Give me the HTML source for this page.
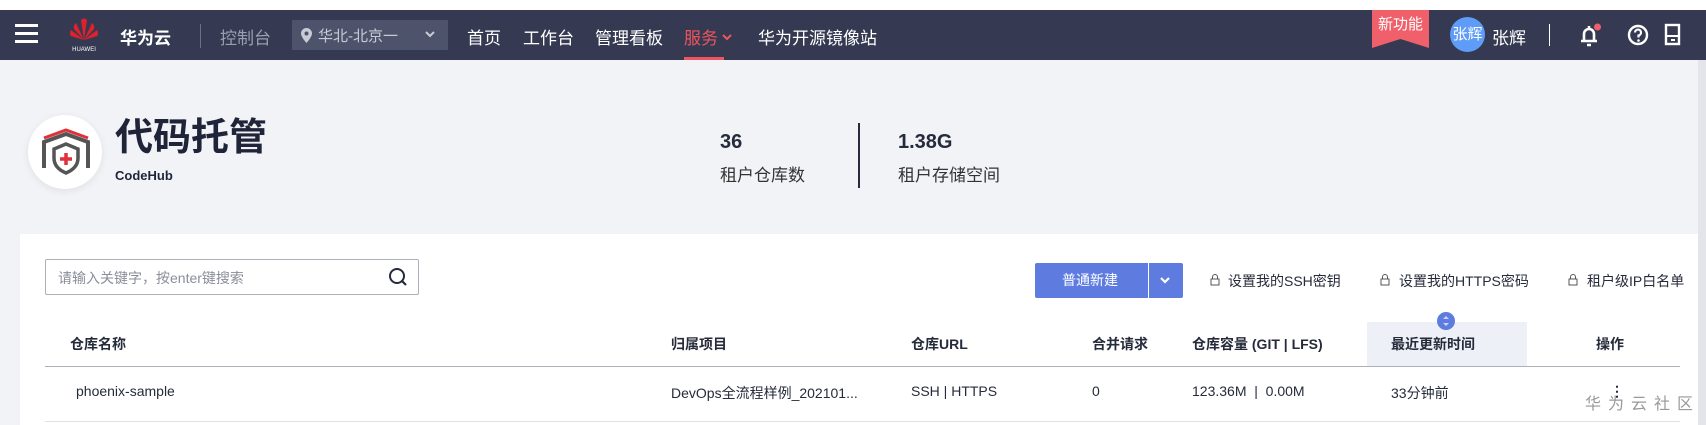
<!DOCTYPE html>
<html><head><meta charset="utf-8"><style>
*{margin:0;padding:0;box-sizing:border-box}
body{width:1706px;height:425px;overflow:hidden;background:#f1f3f7;font-family:"Liberation Sans","Noto Sans CJK SC",sans-serif;position:relative;color:#252b3a}
.a{position:absolute;white-space:nowrap}
#top{position:absolute;left:0;top:0;width:1706px;height:10px;background:#fff}
#nav{position:absolute;left:0;top:10px;width:1706px;height:50px;background:#353a52;color:#fff}
.nv{position:absolute;top:14px;font-size:17px;color:#fff}
.th{font-size:14px;font-weight:bold;top:334px;color:#252b3a}
.td{font-size:14px;top:383px;color:#252b3a}
.lk{font-size:14px;top:271px;color:#252b3a}
</style></head><body>
<div id="top"></div>
<div id="nav">
 <div class="a" style="left:15px;top:14px;width:23px;height:3px;background:#fff;box-shadow:0 8px 0 #fff,0 16px 0 #fff"></div>
 <svg class="a" style="left:64px;top:4px" width="40" height="40" viewBox="0 0 40 40">
  <g fill="#e0202a"><path d="M20 26 L17 6 Q20 3 23 6Z"/><path d="M20 26 L12 9 Q9 11 10 15Z"/><path d="M20 26 L28 9 Q31 11 30 15Z"/><path d="M20 26 L7 16 Q5 20 7 22Z"/><path d="M20 26 L33 16 Q35 20 33 22Z"/></g>
  <text x="20" y="37" font-size="6" fill="#fff" text-anchor="middle" font-family="Liberation Sans">HUAWEI</text></svg>
 <div class="nv" style="left:120px;font-weight:bold">华为云</div>
 <div class="a" style="left:200px;top:14px;width:1px;height:24px;background:#6b7088"></div>
 <div class="nv" style="left:220px;color:#9a9eb0">控制台</div>
 <div class="a" style="left:292px;top:10px;width:156px;height:30px;background:#4d536b;color:#c8cbd6;font-size:15px;padding:5px 0 0 26px">华北-北京一
  <svg style="position:absolute;left:133px;top:11px" width="10" height="8"><path d="M1 1l4 4 4-4" stroke="#c8cbd6" stroke-width="2" fill="none"/></svg>
  <svg style="position:absolute;left:9px;top:8px" width="11" height="15" viewBox="0 0 11 15"><path d="M5.5 0a5.5 5.5 0 0 0-5.5 5.5C0 9 5.5 15 5.5 15S11 9 11 5.5A5.5 5.5 0 0 0 5.5 0z" fill="#c8cbd6"/><circle cx="5.5" cy="5.5" r="2" fill="#4d536b"/></svg></div>
 <div class="nv" style="left:467px">首页</div>
 <div class="nv" style="left:523px">工作台</div>
 <div class="nv" style="left:595px">管理看板</div>
 <div class="nv" style="left:684px;color:#f0545c">服务</div>
 <svg class="a" style="left:722px;top:24px" width="10" height="8"><path d="M1 1l4 4 4-4" stroke="#f0545c" stroke-width="2" fill="none"/></svg>
 <div class="a" style="left:684px;top:47px;width:40px;height:3px;background:#f0545c"></div>
 <div class="nv" style="left:758px">华为开源镜像站</div>
 <svg class="a" style="left:1372px;top:0" width="57" height="38"><path d="M0 0H57V38L28.5 29L0 38Z" fill="#f0606a"/><text x="28.5" y="19" font-size="15" fill="#fff" text-anchor="middle" font-family="Noto Sans CJK SC">新功能</text></svg>
 <div class="a" style="left:1450px;top:7px;width:35px;height:35px;border-radius:50%;background:#5e9cf7;font-size:15px;color:#fff;text-align:center;line-height:35px">张辉</div>
 <div class="nv" style="left:1492px">张辉</div>
 <div class="a" style="left:1549px;top:14px;width:1px;height:22px;background:#fff"></div>
 <svg class="a" style="left:1576px;top:11px" width="28" height="28" viewBox="0 0 28 28"><path d="M5 20h16M8 20V13a5 5 0 0 1 10 0v7M13 5v3M11 24h4" stroke="#fff" stroke-width="2.6" fill="none"/><circle cx="21.5" cy="6" r="3.5" fill="#f0606a"/></svg>
 <svg class="a" style="left:1626px;top:13px" width="24" height="24" viewBox="0 0 24 24"><circle cx="12" cy="12" r="9" stroke="#fff" stroke-width="2.4" fill="none"/><path d="M9 9.5a3 3 0 1 1 3.5 3v2" stroke="#fff" stroke-width="2.2" fill="none"/><circle cx="12.5" cy="17.5" r="1.3" fill="#fff"/></svg>
 <svg class="a" style="left:1664px;top:13px" width="18" height="24" viewBox="0 0 18 24"><rect x="2" y="2" width="13" height="19" stroke="#fff" stroke-width="2.4" fill="none"/><path d="M2 13h13" stroke="#fff" stroke-width="2"/><rect x="7" y="16" width="4" height="2" fill="#fff"/></svg>
</div>
<div class="a" style="left:1698px;top:60px;width:8px;height:365px;background:#e3e5ea"></div>
<div class="a" style="left:28px;top:115px;width:74px;height:74px;border-radius:50%;background:#fff;box-shadow:0 2px 8px rgba(0,0,0,.08)"></div>
<svg class="a" style="left:38px;top:124px" width="56" height="56" viewBox="0 0 56 56">
 <path d="M6 14 L28 6 L50 14" stroke="#e0303a" stroke-width="3" fill="none"/>
 <path d="M6 44 V18 L28 10 L50 18 V44" stroke="#555" stroke-width="4" fill="none"/>
 <path d="M28 20 L16 25 V34 Q16 44 28 49 Q40 44 40 34 V25Z" stroke="#555" stroke-width="3.5" fill="#fff"/>
 <path d="M28 29v12M22 35h12" stroke="#e0303a" stroke-width="3.5"/>
</svg>
<div class="a" style="left:115px;top:113px;font-size:38px;font-weight:bold;color:#1f2438;line-height:50px">代码托管</div>
<div class="a" style="left:115px;top:168px;font-size:13px;font-weight:bold;color:#1f2438">CodeHub</div>
<div class="a" style="left:720px;top:131px;font-size:20px;font-weight:bold">36</div>
<div class="a" style="left:720px;top:161px;font-size:17px;color:#333">租户仓库数</div>
<div class="a" style="left:858px;top:123px;width:2px;height:65px;background:#252b3a"></div>
<div class="a" style="left:898px;top:131px;font-size:20px;font-weight:bold">1.38G</div>
<div class="a" style="left:898px;top:161px;font-size:17px;color:#333">租户存储空间</div>
<div class="a" style="left:20px;top:234px;width:1678px;height:191px;background:#fff"></div>
<div class="a" style="left:45px;top:259px;width:374px;height:36px;border:1px solid #adb0b8;border-radius:2px;font-size:14px;color:#8a8e99;padding:8px 0 0 12px">请输入关键字，按enter键搜索
 <svg style="position:absolute;right:10px;top:7px" width="20" height="20" viewBox="0 0 20 20"><circle cx="9" cy="9" r="7" stroke="#252b3a" stroke-width="2" fill="none"/><path d="M14 14l4 4" stroke="#252b3a" stroke-width="2.2"/></svg></div>
<div class="a" style="left:1035px;top:263px;width:148px;height:35px;background:#5e7ce0;border-radius:2px;color:#fff;font-size:14px;line-height:35px;padding-left:27px">普通新建</div>
<div class="a" style="left:1148px;top:263px;width:1px;height:35px;background:#fff"></div>
<svg class="a" style="left:1160px;top:277px" width="10" height="8"><path d="M1 1l4 4 4-4" stroke="#fff" stroke-width="2.2" fill="none"/></svg>
<svg class="a" style="left:1210px;top:273px" width="10" height="13"><path d="M2.5 6V4a2.5 2.5 0 0 1 5 0v2" stroke="#555" fill="none"/><rect x="1" y="6" width="8" height="6" stroke="#555" fill="#fff"/></svg>
<div class="a lk" style="left:1228px">设置我的SSH密钥</div>
<svg class="a" style="left:1380px;top:273px" width="10" height="13"><path d="M2.5 6V4a2.5 2.5 0 0 1 5 0v2" stroke="#555" fill="none"/><rect x="1" y="6" width="8" height="6" stroke="#555" fill="#fff"/></svg>
<div class="a lk" style="left:1399px">设置我的HTTPS密码</div>
<svg class="a" style="left:1568px;top:273px" width="10" height="13"><path d="M2.5 6V4a2.5 2.5 0 0 1 5 0v2" stroke="#555" fill="none"/><rect x="1" y="6" width="8" height="6" stroke="#555" fill="#fff"/></svg>
<div class="a lk" style="left:1587px">租户级IP白名单</div>
<div class="a" style="left:1367px;top:322px;width:160px;height:44px;background:#eef0f8"></div>
<div class="a" style="left:1437px;top:312px;width:18px;height:18px;border-radius:50%;background:#5e7ce0"></div>
<svg class="a" style="left:1442px;top:314px" width="8" height="14"><path d="M1 5l3-3 3 3z M1 9l3 3 3-3z" fill="#c9d4f7"/></svg>
<div class="a th" style="left:70px">仓库名称</div>
<div class="a th" style="left:671px">归属项目</div>
<div class="a th" style="left:911px">仓库URL</div>
<div class="a th" style="left:1092px">合并请求</div>
<div class="a th" style="left:1192px">仓库容量 (GIT | LFS)</div>
<div class="a th" style="left:1391px">最近更新时间</div>
<div class="a th" style="left:1596px">操作</div>
<div class="a" style="left:45px;top:366px;width:1635px;height:1px;background:#adb0b8"></div>
<div class="a td" style="left:76px">phoenix-sample</div>
<div class="a td" style="left:671px">DevOps全流程样例_202101...</div>
<div class="a td" style="left:911px">SSH | HTTPS</div>
<div class="a td" style="left:1092px">0</div>
<div class="a td" style="left:1192px">123.36M &nbsp;| &nbsp;0.00M</div>
<div class="a td" style="left:1391px">33分钟前</div>
<div class="a td" style="left:1610px;font-weight:bold">⋮</div>
<div class="a" style="left:1585px;top:390px;font-size:16px;color:#999;letter-spacing:7px">华为云社区</div>
<div class="a" style="left:45px;top:421px;width:1635px;height:1px;background:#dfe1e6"></div>
</body></html>
